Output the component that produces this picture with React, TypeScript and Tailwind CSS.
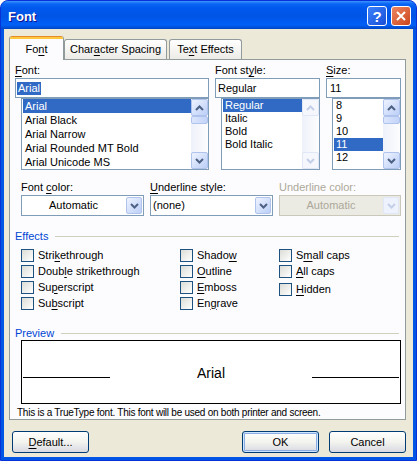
import type { ReactNode } from "react";

const U = ({ children }: { children: ReactNode }) => (
  <span className="underline underline-offset-[2px]">{children}</span>
);

const Chevron = ({ dir, color = "#4D6185" }: { dir: "up" | "down"; color?: string }) => (
  <svg width="9" height="6" viewBox="0 0 9 6">
    <path
      d={dir === "up" ? "M1 5 L4.5 1.5 L8 5" : "M1 1 L4.5 4.5 L8 1"}
      fill="none"
      stroke={color}
      strokeWidth="2"
    />
  </svg>
);

const ScrollBtn = ({ dir, disabled }: { dir: "up" | "down"; disabled?: boolean }) => (
  <div
    className={
      disabled
        ? "h-[17px] flex items-center justify-center rounded-[2px] border border-[#E0E7F6] bg-[#F5F7FD]"
        : "h-[17px] flex items-center justify-center rounded-[2px] border border-[#AFC3EC] bg-linear-to-br from-[#EEF3FF] to-[#BCCFF7]"
    }
  >
    <Chevron dir={dir} color={disabled ? "#C3CFE8" : "#4D6185"} />
  </div>
);

const ScrollBar = ({ thumb, disabled }: { thumb?: boolean; disabled?: boolean }) => (
  <div className="w-[17px] flex flex-col bg-linear-to-r from-[#EEF1FA] to-[#FDFDFE]">
    <ScrollBtn dir="up" disabled={disabled} />
    {thumb && (
      <div className="h-[8px] rounded-[2px] border border-[#AFC3EC] bg-linear-to-r from-[#DCE6FC] to-[#C3D4F9]" />
    )}
    <div className="flex-1" />
    <ScrollBtn dir="down" disabled={disabled} />
  </div>
);

const ListBox = ({
  items,
  selected,
  row,
  thumb,
  disabled,
}: {
  items: string[];
  selected: string;
  row: string;
  thumb?: boolean;
  disabled?: boolean;
}) => (
  <div className="ml-[6px] h-[72px] flex border border-[#7F9DB9] bg-white">
    <div className="flex-1 overflow-hidden pl-[1px]">
      {items.map((it) => (
        <div
          key={it}
          className={`${row} pl-[2px] whitespace-nowrap ${it === selected ? "bg-[#316AC5] text-white" : ""}`}
        >
          {it}
        </div>
      ))}
    </div>
    <ScrollBar thumb={thumb} disabled={disabled} />
  </div>
);

const Combo = ({ text, center, disabled }: { text: string; center?: boolean; disabled?: boolean }) => (
  <div
    className={
      disabled
        ? "h-[21px] flex border border-[#CAC8BB] bg-[#EBEBE4] text-[#ACA899]"
        : "h-[21px] flex border border-[#7F9DB9] bg-white"
    }
  >
    <div className={center ? "flex-1 flex items-center justify-center" : "flex-1 flex items-center pl-[2px]"}>
      {text}
    </div>
    <div
      className={
        disabled
          ? "w-[16px] m-[1px] flex items-center justify-center rounded-[2px] border border-[#E0E7F6] bg-[#EEF2FC]"
          : "w-[16px] m-[1px] flex items-center justify-center rounded-[2px] border border-[#AFC3EC] bg-linear-to-br from-[#EEF3FF] to-[#BCCFF7]"
      }
    >
      <Chevron dir="down" color={disabled ? "#C3CFE8" : "#4D6185"} />
    </div>
  </div>
);

const Check = ({ children, className = "" }: { children: ReactNode; className?: string }) => (
  <div className={`h-[16px] flex items-center gap-[4px] ${className}`}>
    <div className="w-[13px] h-[13px] border border-[#1C5180] bg-linear-to-br from-[#DCDCD7] to-white" />
    <span>{children}</span>
  </div>
);

const XpButton = ({ children, isDefault }: { children: ReactNode; isDefault?: boolean }) => (
  <div
    className={`w-[77px] h-[22px] flex items-center justify-center rounded-[3px] border border-[#003C74] bg-linear-to-b from-white via-[#F3F3EF] to-[#D8DAE2] ${
      isDefault ? "shadow-[inset_0_0_0_1px_#CEE7FF,inset_0_0_0_2px_#89ADE4]" : ""
    }`}
  >
    {children}
  </div>
);

const Tab = ({ children, active, w }: { children: ReactNode; active?: boolean; w: string }) =>
  active ? (
    <div
      className={`${w} h-[24px] flex flex-col rounded-t-[3px] border-x border-[#919B9C] bg-[#FCFCFE] overflow-hidden`}
    >
      <div className="h-[1px] bg-[#E68B2C]" />
      <div className="h-[2px] bg-[#FFC73C]" />
      <div className="flex-1 flex items-center justify-center pb-[1px]">{children}</div>
    </div>
  ) : (
    <div
      className={`${w} h-[20px] mb-[1px] flex items-center justify-center rounded-t-[3px] border-x border-t border-[#919B9C] bg-linear-to-b from-white to-[#ECEBE6]`}
    >
      {children}
    </div>
  );

export default function App() {
  return (
    <div className="w-[417px] h-[461px] flex flex-col rounded-t-[8px] overflow-hidden bg-[#0055E5] border border-[#0831D9] text-[11px] leading-[13px] text-black font-['Liberation_Sans',Arial,sans-serif]">
      {/* title bar */}
      <div className="h-[28px] flex items-center pl-[7px] pr-[5px] bg-[linear-gradient(to_bottom,#3D95FF_0%,#0A66F5_10%,#0058EE_25%,#0055E5_55%,#005BF2_75%,#0060F5_85%,#0050D8_95%,#0044C0_100%)]">
        <span className="pt-[3px] text-white font-bold text-[13px] [text-shadow:1px_1px_#0F1089]">Font</span>
        <div className="ml-auto flex gap-[4px] pt-[2px]">
          <div className="w-[20px] h-[20px] flex items-center justify-center rounded-[3px] border border-white bg-linear-to-br from-[#3C82FC] to-[#1A4ED6] text-white font-bold text-[15px]">
            ?
          </div>
          <div className="w-[20px] h-[20px] flex items-center justify-center rounded-[3px] border border-white bg-linear-to-br from-[#EC8560] to-[#CB4418]">
            <svg width="10" height="10" viewBox="0 0 10 10">
              <path d="M1 1 L9 9 M9 1 L1 9" stroke="white" strokeWidth="2" />
            </svg>
          </div>
        </div>
      </div>

      {/* client area */}
      <div className="flex-1 mx-[3px] mb-[3px] flex flex-col bg-[#ECE9D8] pl-[5px] pr-[7px]">
        {/* tabs */}
        <div className="h-[31px] -mb-[1px] relative z-10 flex items-end">
          <Tab active w="w-[55px]">
            <span>
              Fo<U>n</U>t
            </span>
          </Tab>
          <Tab w="w-[103px]">
            <span>
              Char<U>a</U>cter Spacing
            </span>
          </Tab>
          <div className="w-[2px]" />
          <Tab w="w-[73px]">
            <span>
              Te<U>x</U>t Effects
            </span>
          </Tab>
        </div>

        {/* tab page */}
        <div className="h-[361px] flex flex-col border border-[#919B9C] bg-[#FCFCFE] pl-[5px] pr-[4px]">
          {/* font / style / size */}
          <div className="mt-[4px] flex gap-[6px]">
            <div className="w-[194px] flex flex-col">
              <div className="h-[13px]">
                <U>F</U>ont:
              </div>
              <div className="mt-[1px] h-[20px] flex items-center border border-[#7F9DB9] bg-white pl-[1px]">
                <span className="bg-[#316AC5] text-white px-[1px]">Arial</span>
              </div>
              <ListBox
                items={["Arial", "Arial Black", "Arial Narrow", "Arial Rounded MT Bold", "Arial Unicode MS"]}
                selected="Arial"
                row="h-[14px] leading-[14px]"
                thumb
              />
            </div>
            <div className="w-[105px] flex flex-col">
              <div className="h-[13px]">
                Font st<U>y</U>le:
              </div>
              <div className="mt-[1px] h-[20px] flex items-center border border-[#7F9DB9] bg-white pl-[2px]">
                Regular
              </div>
              <ListBox
                items={["Regular", "Italic", "Bold", "Bold Italic"]}
                selected="Regular"
                row="h-[13px] leading-[13px]"
                disabled
              />
            </div>
            <div className="w-[75px] flex flex-col">
              <div className="h-[13px]">
                <U>S</U>ize:
              </div>
              <div className="mt-[1px] h-[20px] flex items-center border border-[#7F9DB9] bg-white pl-[3px]">
                11
              </div>
              <ListBox
                items={["8", "9", "10", "11", "12"]}
                selected="11"
                row="h-[13px] leading-[13px]"
                thumb
              />
            </div>
          </div>

          {/* colour / underline */}
          <div className="mt-[11px] pl-[6px] flex gap-[6px]">
            <div className="w-[123px] flex flex-col">
              <div className="h-[13px]">
                Font <U>c</U>olor:
              </div>
              <div className="mt-[1px]">
                <Combo text="Automatic" center />
              </div>
            </div>
            <div className="w-[123px] flex flex-col">
              <div className="h-[13px]">
                <U>U</U>nderline style:
              </div>
              <div className="mt-[1px]">
                <Combo text="(none)" />
              </div>
            </div>
            <div className="w-[122px] flex flex-col">
              <div className="h-[13px] text-[#ACA899]">Underline color:</div>
              <div className="mt-[1px]">
                <Combo text="Automatic" center disabled />
              </div>
            </div>
          </div>

          {/* effects */}
          <div className="mt-[14px] h-[13px] flex items-center">
            <span className="text-[#0046D5]">Effects</span>
            <div className="flex-1 h-px ml-[7px] mr-[2px] bg-[#D0D0BF]" />
          </div>
          <div className="mt-[4px] pl-[6px] flex">
            <div className="w-[159px] flex flex-col">
              <Check>
                Stri<U>k</U>ethrough
              </Check>
              <Check>
                Doub<U>l</U>e strikethrough
              </Check>
              <Check>
                Su<U>p</U>erscript
              </Check>
              <Check>
                Su<U>b</U>script
              </Check>
            </div>
            <div className="w-[99px] flex flex-col">
              <Check>
                Shado<U>w</U>
              </Check>
              <Check>
                <U>O</U>utline
              </Check>
              <Check>
                <U>E</U>mboss
              </Check>
              <Check>
                En<U>g</U>rave
              </Check>
            </div>
            <div className="flex flex-col">
              <Check>
                S<U>m</U>all caps
              </Check>
              <Check>
                <U>A</U>ll caps
              </Check>
              <Check className="mt-[2px]">
                <U>H</U>idden
              </Check>
            </div>
          </div>

          {/* preview */}
          <div className="mt-[16px] h-[13px] flex items-center">
            <span className="text-[#0046D5]">Preview</span>
            <div className="flex-1 h-px ml-[7px] mr-[2px] bg-[#D0D0BF]" />
          </div>
          <div className="ml-[6px] w-[380px] h-[65px] border border-black bg-white flex flex-col pt-[24px] px-[1px]">
            <div className="flex items-baseline justify-between">
              <div className="w-[87px] h-px bg-black" />
              <span className="text-[14px] leading-[16px]">Arial</span>
              <div className="w-[87px] h-px bg-black" />
            </div>
          </div>
          <div className="mt-[2px] ml-[2px] text-[10px] tracking-[-0.25px]">
            This is a TrueType font. This font will be used on both printer and screen.
          </div>
        </div>

        {/* buttons */}
        <div className="mt-[11px] flex items-center">
          <div className="ml-[3px]">
            <XpButton>
              <span>
                <U>D</U>efault...
              </span>
            </XpButton>
          </div>
          <div className="ml-auto flex gap-[10px]">
            <XpButton isDefault>OK</XpButton>
            <XpButton>Cancel</XpButton>
          </div>
        </div>
      </div>
    </div>
  );
}
